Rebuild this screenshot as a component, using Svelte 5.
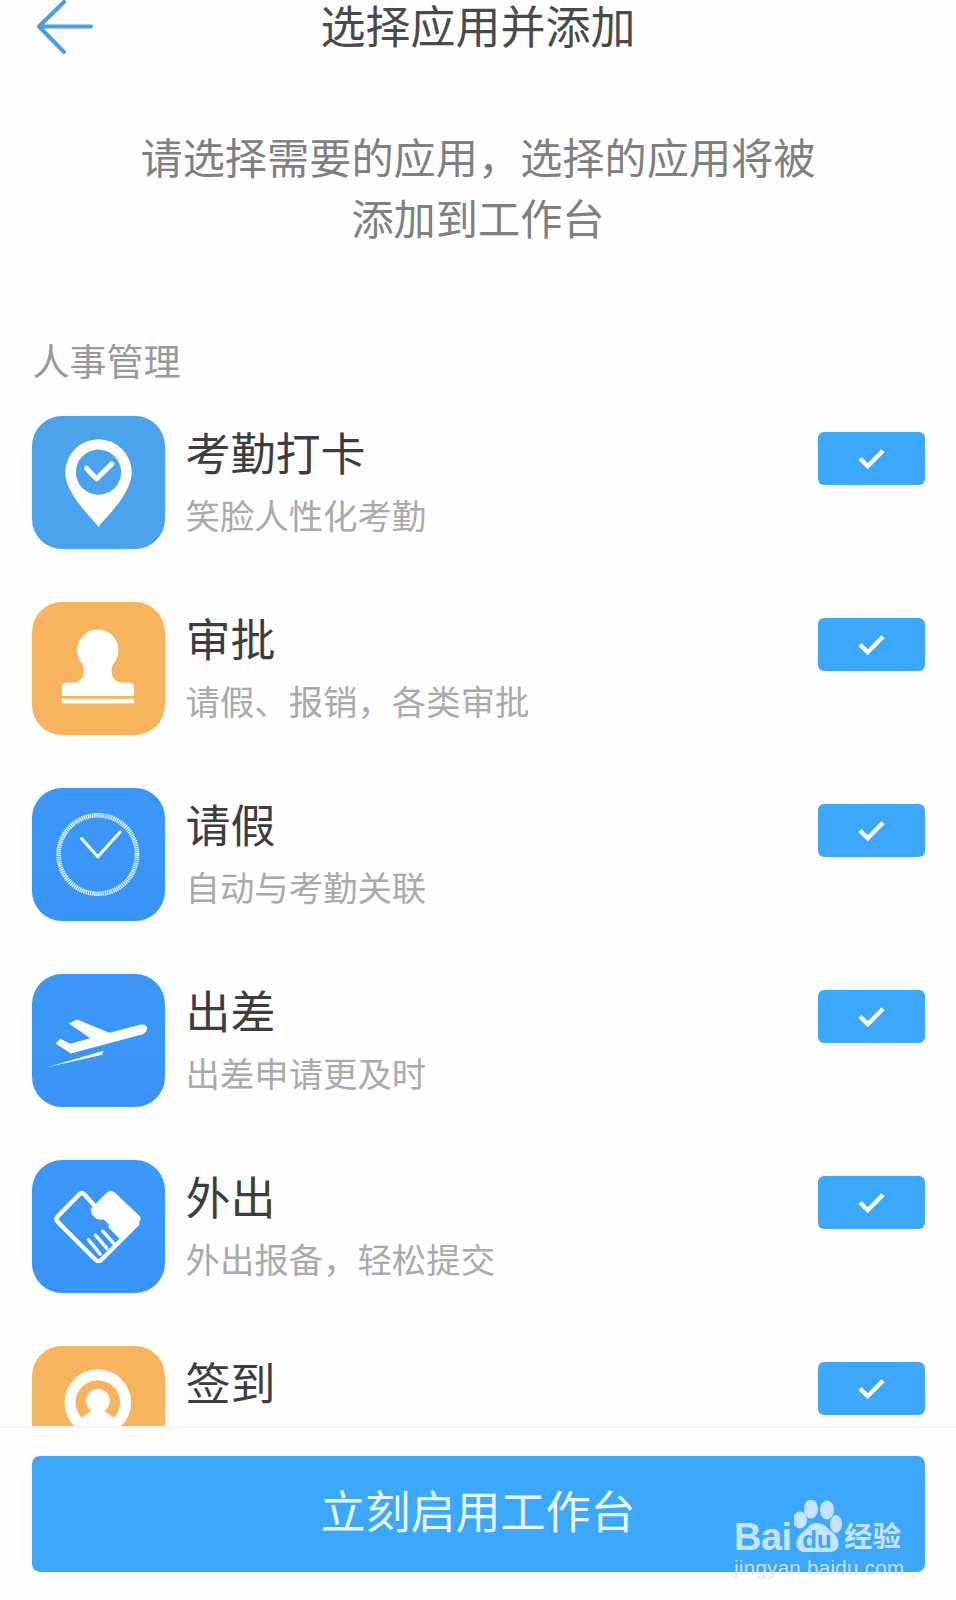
<script>
  const apps = [
    { key: 'pin', title: '考勤打卡', sub: '笑脸人性化考勤', tone: 'sky', oy: 48 },
    { key: 'stamp', title: '审批', sub: '请假、报销，各类审批', tone: 'amber', oy: 607 },
    { key: 'clock', title: '请假', sub: '自动与考勤关联', tone: 'blue', oy: 55 },
    { key: 'plane', title: '出差', sub: '出差申请更及时', tone: 'blue', oy: 613 },
    { key: 'hands', title: '外出', sub: '外出报备，轻松提交', tone: 'blue', oy: 62 },
    { key: 'user', title: '签到', sub: '', tone: 'amber', oy: 620 }
  ];
</script>

<div class="page">
  <main class="main">
    <header class="header">
      <svg class="back" viewBox="0 0 56 54" aria-hidden="true">
        <path d="M27 2 L2 26.5 L27 52 M2 26.5 H54" />
      </svg>
      <h1>选择应用并添加</h1>
      <span></span>
    </header>

    <p class="intro">请选择需要的应用，选择的应用将被<br />添加到工作台</p>

    <h2 class="section">人事管理</h2>

    <ul class="list">
      {#each apps as app}
        <li class="row">
          <div class="icon {app.tone}">
            <svg viewBox="35 {app.oy} 400 400" aria-hidden="true">
              {#if app.key === 'pin'}
                <path fill="#fff" d="M235 382 C222 360 135 285 135 218 A100 100 0 0 1 335 218 C335 285 248 360 235 382 Z" />
                <circle cx="235" cy="217" r="68" fill="#4aa3ec" />
                <path class="line" stroke-width="15" d="M199 205 L229 237 L275 192" />
              {:else if app.key === 'stamp'}
                <path fill="#fff" d="M125 890 V862 Q125 850 140 850 H160 Q190 846 192 815 Q192 800 184 790 A62 62 0 1 1 282 790 Q274 800 274 815 Q276 846 306 850 H326 Q342 850 342 862 V890 Z" />
                <rect x="125" y="898" width="217" height="14" fill="#fff" />
              {:else if app.key === 'clock'}
                <circle cx="233" cy="255" r="118" fill="none" stroke="#fff" stroke-width="14" stroke-dasharray="4 2.4" opacity=".95" />
                <path class="line" stroke-width="9" d="M184 207 L233 262 L300 187" />
              {:else if app.key === 'plane'}
                <path fill="#fff" d="M363 765 Q378 763 381 775 Q382 787 368 794 L152 852 L106 822 L120 808 L150 823 L210 806 L146 762 L170 750 L268 790 Z" />
                <path fill="#fff" d="M250 844 L78 894 L246 856 Z" />
              {:else if app.key === 'hands'}
                <path class="line" stroke-width="13" d="M222 198 L192 165 Q185 158 178 165 L112 232 Q105 240 112 248 L226 362 Q235 370 244 362 L352 254" />
                <path fill="#fff" d="M214 206 L260 160 Q272 150 284 160 L358 230 Q366 240 358 248 L306 294 L250 240 Q232 246 220 232 Q208 218 214 206 Z" />
                <path class="line" stroke-width="10" d="M205 302 L240 345 M226 288 L260 328 M248 276 L280 312 M270 262 L298 292" />
              {:else}
                <circle cx="233" cy="790" r="100" fill="#fff" />
                <circle cx="233" cy="790" r="67" fill="#f8b45c" />
                <circle cx="233" cy="785" r="36" fill="#fff" />
                <path fill="#fff" d="M185 835 L215 815 H251 L281 835 L300 900 H166 Z" />
              {/if}
            </svg>
          </div>
          <div class="text">
            <div class="name">{app.title}</div>
            <div class="sub">{app.sub}</div>
          </div>
          <div class="check">
            <svg viewBox="0 0 28 24" aria-hidden="true"><path d="M2 12 L10 20 L26 4" /></svg>
          </div>
        </li>
      {/each}
    </ul>
  </main>

  <footer class="footer">
    <button class="start" type="button">立刻启用工作台</button>
    <div class="mark">
      <span class="bai">Bai</span>
      <svg class="paw" viewBox="0 0 60 56" aria-hidden="true">
        <ellipse cx="17" cy="9" rx="7" ry="9.5" />
        <ellipse cx="33" cy="10" rx="7" ry="9.5" />
        <ellipse cx="6" cy="20" rx="7" ry="8.5" />
        <ellipse cx="42" cy="24" rx="6" ry="9" />
        <path d="M23 23 C30 23 33 28 38 32 C47 38 47 52 36 52 L11 52 C0 52 0 38 9 32 C14 28 16 23 23 23 Z" />
        <text x="23" y="48" class="du">du</text>
      </svg>
      <span class="jy">经验</span>
      <span class="url">jingyan.baidu.com</span>
    </div>
  </footer>
</div>

<style>
  :global(body) {
    margin: 0;
    background: #fefefe;
  }
  .page {
    width: 956px;
    height: 1600px;
    display: flex;
    flex-direction: column;
    overflow: hidden;
    background: #fefefe;
    font-family: "Noto Sans CJK SC", "Noto Sans", sans-serif;
  }
  .main {
    height: 1428px;
    overflow: hidden;
    flex: none;
  }
  .header {
    display: grid;
    grid-template-columns: 1fr auto 1fr;
    align-items: start;
    padding-left: 37px;
    padding-right: 37px;
    height: 57px;
  }
  .back {
    width: 56px;
    height: 54px;
    display: block;
  }
  .back path {
    fill: none;
    stroke: #4a9de6;
    stroke-width: 4;
    stroke-linecap: round;
    stroke-linejoin: round;
  }
  h1 {
    margin: 0;
    padding-top: 1px;
    font-family: "Liberation Sans", "Noto Sans CJK SC", sans-serif;
    font-size: 45px;
    font-weight: 400;
    line-height: 56px;
    color: #4a4a4a;
    white-space: nowrap;
  }
  .intro {
    margin: 68px 0 0;
    text-align: center;
    font-size: 42.2px;
    line-height: 61px;
    color: #808080;
  }
  .section {
    margin: 91px 0 0 32.5px;
    font-size: 37px;
    font-weight: 400;
    line-height: 44px;
    color: #999;
  }
  .list {
    list-style: none;
    margin: 34px 0 0;
    padding: 0 31.5px 0 31.5px;
  }
  .row {
    height: 186px;
    display: flex;
    align-items: flex-start;
    gap: 21px;
  }
  .icon {
    width: 133px;
    height: 133px;
    flex: none;
    border-radius: 30px;
    overflow: hidden;
  }
  .icon svg {
    width: 133px;
    height: 133px;
    display: block;
  }
  .sky { background: #4aa3ec; }
  .amber { background: #f8b45c; }
  .blue { background: linear-gradient(#3c98f8, #3794f6); }
  .line {
    fill: none;
    stroke: #fff;
    stroke-linecap: round;
    stroke-linejoin: round;
  }
  .text {
    flex: 1;
    padding-top: 10px;
  }
  .name {
    font-size: 45px;
    line-height: 52px;
    color: #3d3d3d;
  }
  .sub {
    margin-top: 16px;
    font-size: 34.4px;
    line-height: 40px;
    color: #aaa;
  }
  .check {
    width: 107px;
    height: 53px;
    margin-top: 16px;
    flex: none;
    border-radius: 6px;
    background: #3ba8fb;
    display: flex;
    align-items: center;
    justify-content: center;
  }
  .check svg {
    width: 27px;
    height: 23px;
    display: block;
  }
  .check path {
    fill: none;
    stroke: #fff;
    stroke-width: 4.5;
  }
  .footer {
    flex: 1;
    position: relative;
    border-top: 2px solid #f5f5f5;
    margin-top: -2px;
    padding: 28px 31.5px 0 31.5px;
    background: #fefefe;
  }
  .start {
    display: block;
    width: 100%;
    height: 116px;
    border: 0;
    border-radius: 8px;
    background: #3ba8fb;
    color: #e8f5ff;
    font-family: inherit;
    font-size: 45px;
    padding: 0 0 10px;
  }
  .mark {
    position: absolute;
    left: 734px;
    top: 61px;
    width: 172px;
    height: 90px;
    color: #c6e4fd;
  }
  .bai {
    position: absolute;
    left: 0;
    top: 30px;
    font-family: "Liberation Sans", sans-serif;
    font-weight: 700;
    font-size: 38px;
    line-height: 36px;
    letter-spacing: -0.5px;
  }
  .paw {
    position: absolute;
    left: 60px;
    top: 11px;
    width: 60px;
    height: 56px;
    fill: #c6e4fd;
  }
  .du {
    font-family: "Liberation Sans", sans-serif;
    font-weight: 700;
    font-size: 24px;
    fill: #3ba8fb;
    text-anchor: middle;
  }
  .jy {
    position: absolute;
    left: 110px;
    top: 29px;
    font-size: 28.5px;
    line-height: 34px;
    font-weight: 700;
  }
  .url {
    position: absolute;
    left: 0;
    top: 66px;
    font-family: "Liberation Sans", sans-serif;
    font-size: 20.5px;
    letter-spacing: 0.3px;
    line-height: 26px;
    color: rgba(236, 246, 255, 0.85);
    text-shadow: 0 0 1px rgba(0, 0, 0, 0.18);
    white-space: nowrap;
  }
</style>
